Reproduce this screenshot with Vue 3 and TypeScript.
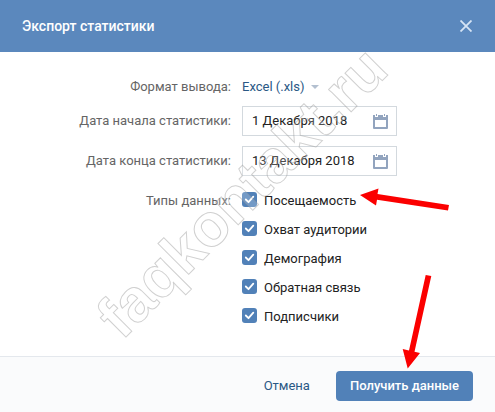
<script setup lang="ts">
import { ref } from 'vue'

interface DataType {
  id: string
  label: string
  checked: boolean
}

const format = ref('xls')
const dateFrom = ref('1 Декабря 2018')
const dateTo = ref('13 Декабря 2018')
const types = ref<DataType[]>([
  { id: 'visits', label: 'Посещаемость', checked: true },
  { id: 'reach', label: 'Охват аудитории', checked: true },
  { id: 'demography', label: 'Демография', checked: true },
  { id: 'feedback', label: 'Обратная связь', checked: true },
  { id: 'subscribers', label: 'Подписчики', checked: true },
])
</script>

<template>
  <form class="dialog" @submit.prevent>
    <header class="header">
      <h1 class="title">Экспорт статистики</h1>
      <button class="close" type="button" aria-label="Закрыть">
        <svg width="12" height="12" viewBox="0 0 12 12">
          <path d="M.5 .5L11.5 11.5M11.5 .5L.5 11.5" fill="none" stroke="#d6e4f5" stroke-width="1.8" />
        </svg>
      </button>
    </header>

    <main class="body">
      <div class="row format-row">
        <label class="name" for="format">Формат вывода:</label>
        <div class="format">
          <select id="format" v-model="format" class="select">
            <option value="xls">Excel (.xls)</option>
          </select>
          <svg class="caret" width="8" height="4" viewBox="0 0 8 4">
            <path d="M0 0H8L4 4Z" fill="#b3c0d0" />
          </svg>
        </div>
      </div>

      <div class="row">
        <label class="name" for="date-from">Дата начала статистики:</label>
        <div class="date">
          <input id="date-from" v-model="dateFrom" class="date-input" type="text" />
          <button class="date-button" type="button" aria-label="Выбрать дату начала">
            <svg width="15" height="15" viewBox="0 0 15 15">
              <path
                d="M0 1H2V3H5V1H6V2H9V1H10V3H13V1H15V14Q15 15 14 15H1Q0 15 0 14ZM2 6V13H13V6Z"
                fill="#92a4be" fill-rule="evenodd"
              />
              <path d="M3.5 0V2M11.5 0V2M6 1.5H9" stroke="#92a4be" />
            </svg>
          </button>
        </div>
      </div>

      <div class="row">
        <label class="name" for="date-to">Дата конца статистики:</label>
        <div class="date">
          <input id="date-to" v-model="dateTo" class="date-input" type="text" />
          <button class="date-button" type="button" aria-label="Выбрать дату конца">
            <svg width="15" height="15" viewBox="0 0 15 15">
              <path
                d="M0 1H2V3H5V1H6V2H9V1H10V3H13V1H15V14Q15 15 14 15H1Q0 15 0 14ZM2 6V13H13V6Z"
                fill="#92a4be" fill-rule="evenodd"
              />
              <path d="M3.5 0V2M11.5 0V2M6 1.5H9" stroke="#92a4be" />
            </svg>
          </button>
        </div>
      </div>

      <div class="row types-row" role="group" aria-labelledby="types-name">
        <span id="types-name" class="name">Типы данных:</span>
        <div class="types">
          <label v-for="item in types" :key="item.id" class="check" :for="item.id">
            <span class="box">
              <input :id="item.id" v-model="item.checked" type="checkbox" />
              <svg v-if="item.checked" width="15" height="15" viewBox="0 0 15 15">
                <path
                  d="M3.8 7.5L6.5 10.2L11.3 4.6" fill="none" stroke="#fff"
                  stroke-width="1.8" stroke-linecap="round" stroke-linejoin="round"
                />
              </svg>
            </span>
            <span>{{ item.label }}</span>
          </label>
        </div>
      </div>
    </main>

    <footer class="footer">
      <button class="cancel" type="button">Отмена</button>
      <button class="submit" type="submit">Получить данные</button>
    </footer>

    <svg class="overlay" width="495" height="412" viewBox="0 0 495 412">
      <text class="watermark" transform="translate(122 341) rotate(-45)">faqkontakt.ru</text>
      <g fill="#fb0000">
        <path d="M360 195L378.5 188.5L377.5 194L449 205L448 210.5L377 199.7L376 205.5Z" />
        <path d="M407.7 368.5L402.7 349L409 350.4L425.7 275L431.3 276L414.5 351.7L420 353Z" />
      </g>
    </svg>
  </form>
</template>

<style>
body {
  margin: 0;
  background: #fff;
}
</style>

<style scoped>
.dialog {
  position: relative;
  display: flex;
  flex-direction: column;
  min-height: 100vh;
  overflow: hidden;
  font: 13px/16px Roboto, "Open Sans", sans-serif;
  color: #222;
}

button,
input,
select {
  margin: 0;
  padding: 0;
  border: 0;
  background: none;
  color: inherit;
  font: inherit;
}

button {
  cursor: pointer;
}

svg {
  display: block;
}

.header {
  display: flex;
  align-items: center;
  justify-content: space-between;
  height: 52px;
  padding: 0 22px;
  background: #5b88bd;
}

.title {
  margin: 0;
  color: #fff;
  font-size: 14px;
  font-weight: 500;
  line-height: 16px;
}

.close {
  padding: 1px;
}

.body {
  display: flex;
  flex: 1;
  flex-direction: column;
  gap: 10px;
  padding: 26px 22px 20px;
}

.row {
  display: grid;
  grid-template-columns: 209px 1fr;
  column-gap: 11px;
  align-items: center;
}

.name {
  color: #656565;
  text-align: right;
}

.format-row {
  height: 18px;
}

.format {
  display: flex;
  align-items: center;
  gap: 6px;
}

.select {
  appearance: none;
  color: #2a5885;
}

.date {
  display: flex;
  box-sizing: border-box;
  width: 155px;
  height: 30px;
  border: 1px solid #d3d9de;
}

.date-input {
  flex: 1;
  min-width: 0;
  padding-left: 9px;
}

.date-button {
  padding: 0 8px;
}

.types-row {
  align-items: start;
  padding-top: 6px;
}

.name,
.check {
  line-height: 18px;
}

.types {
  display: grid;
  gap: 11px;
  justify-items: start;
}

.check {
  display: flex;
  gap: 7px;
}

.box {
  display: grid;
  width: 15px;
  height: 15px;
}

.box > * {
  grid-area: 1 / 1;
}

.box input {
  appearance: none;
  width: 15px;
  height: 15px;
  border-radius: 3px;
  background: #5181b8;
}

.box svg {
  pointer-events: none;
  z-index: 1;
}

.footer {
  display: flex;
  align-items: center;
  justify-content: flex-end;
  gap: 10px;
  padding: 14px 22px 11px;
  border-top: 1px solid #e4e8ed;
  background: #fafbfc;
}

.cancel {
  height: 30px;
  padding: 0 16px;
  color: #2a5885;
}

.submit {
  height: 30px;
  padding: 0 14px;
  border-radius: 4px;
  background: #5181b8;
  color: #fff;
  font-weight: 500;
}

.overlay {
  position: absolute;
  top: 0;
  left: 0;
  pointer-events: none;
  z-index: 2;
}

.watermark {
  fill: rgba(255, 255, 255, 0.2);
  stroke: rgba(150, 150, 150, 0.45);
  stroke-width: 1px;
  font: bold 60px "Liberation Sans", Arial, sans-serif;
}
</style>
